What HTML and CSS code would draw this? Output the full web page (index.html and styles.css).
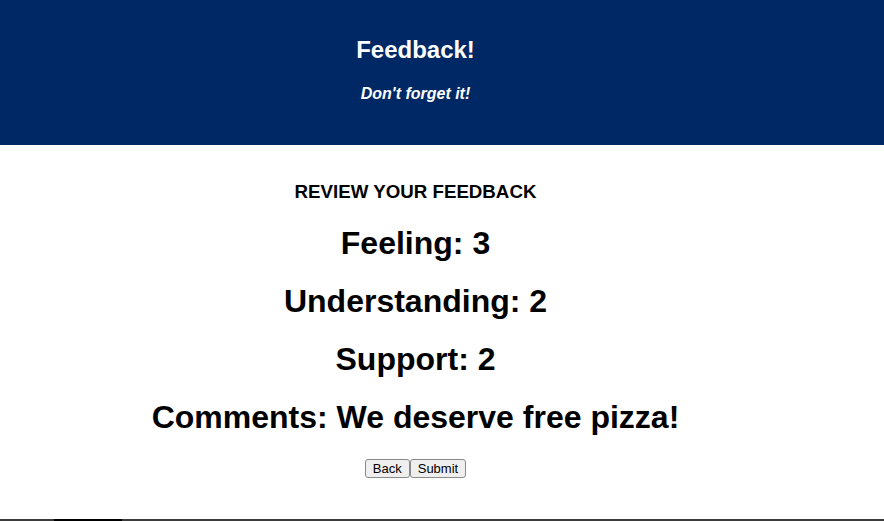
FILE: index.html
```html
<!DOCTYPE html>
<html lang="en">
<head>
<meta charset="utf-8">
<title>Feedback!</title>
<link rel="stylesheet" href="styles.css">
</head>
<body>
<div class="app">
  <header class="app-header">
    <div class="header-inner">
      <h1 class="app-title">Feedback!</h1>
      <p class="app-subtitle">Don't forget it!</p>
    </div>
  </header>
  <main class="review">
    <h3 class="review-title">REVIEW YOUR FEEDBACK</h3>
    <h1 class="review-item">Feeling: 3</h1>
    <h1 class="review-item">Understanding: 2</h1>
    <h1 class="review-item">Support: 2</h1>
    <h1 class="review-item">Comments: We deserve free pizza!</h1>
    <div class="actions"><button class="btn">Back</button><button class="btn">Submit</button></div>
  </main>
</div>
<div class="bottom-bar"><span class="bottom-seg"></span></div>
</body>
</html>
```

FILE: styles.css
```css
html, body {
  margin: 0;
  padding: 0;
  background: #ffffff;
}

body {
  font-family: "Liberation Sans", Arial, Helvetica, sans-serif;
  color: #000;
}

.app-header {
  background: #002864;
  color: #ffffff;
  padding: 36px 0 42px;
}

.header-inner {
  padding-right: 53px;
  text-align: center;
}

.app-title {
  margin: 0;
  font-size: 24px;
  font-weight: bold;
}

.app-subtitle {
  margin: 21px 0 0;
  font-size: 16px;
  font-weight: bold;
  font-style: italic;
}

.review {
  padding-right: 53px;
  text-align: center;
  padding-top: 36px;
}

.review-title {
  margin: 0 0 22.3px;
  font-size: 18.72px;
  font-weight: bold;
}

.review-item {
  margin: 0 0 21px;
  font-size: 32px;
  font-weight: bold;
}

.actions {
  display: flex;
  justify-content: center;
  padding-top: 2px;
}

.btn {
  font-family: "Liberation Sans", Arial, Helvetica, sans-serif;
  font-size: 13px;
  color: #000;
  background: #efefef;
  border: 1px solid #8a8a8a;
  border-radius: 3px;
  padding: 1px 7px;
  height: 19px;
  line-height: 15px;
  margin: 0;
}

.bottom-bar {
  position: fixed;
  left: 0;
  right: 0;
  bottom: 0;
  height: 2px;
  background: #3b3b3b;
}

.bottom-seg {
  position: absolute;
  left: 54px;
  width: 68px;
  top: 0;
  bottom: 0;
  background: #000;
}
```
